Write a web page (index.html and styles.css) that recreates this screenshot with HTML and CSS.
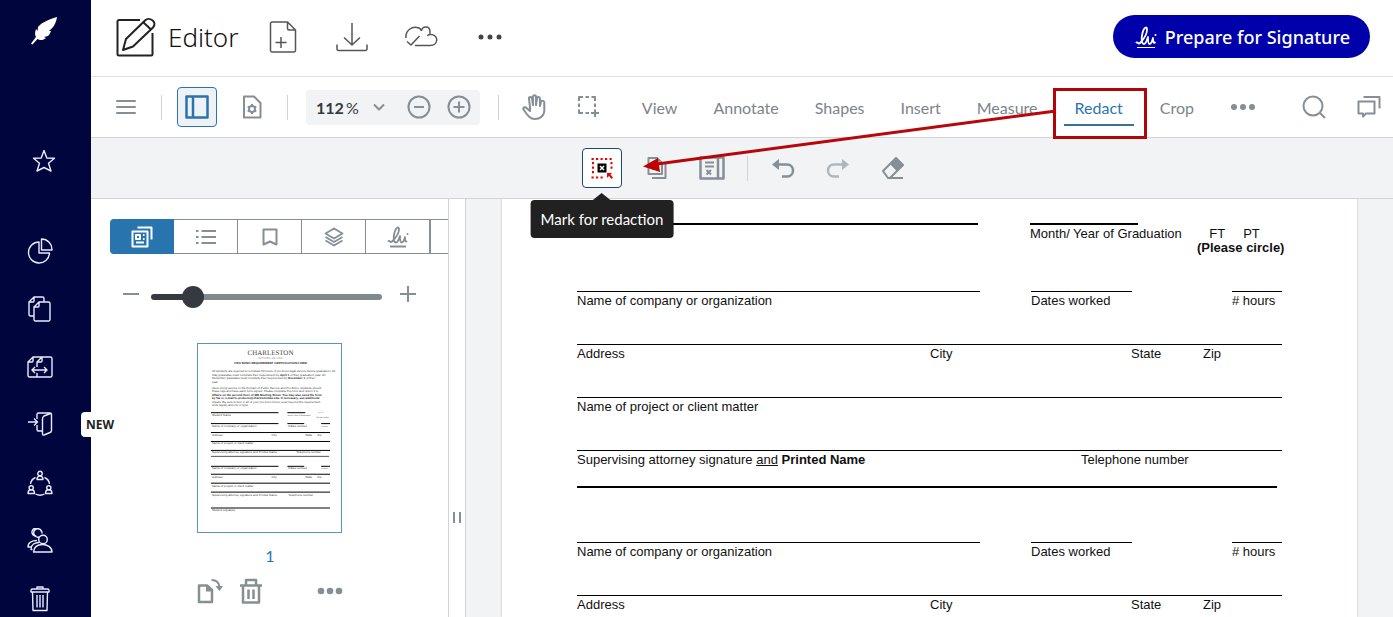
FILE: index.html
```html
<!DOCTYPE html>
<html lang="en">
<head>
    <meta charset="UTF-8">
    <meta name="viewport" content="width=device-width, initial-scale=1.0">
    <title>Editor</title>
    <link rel="stylesheet" href="styles.css">
</head>
<body>
    <nav class="sidebar">
        <a href="#" class="logo" aria-label="Home">
            <svg width="28" height="28" viewBox="0 0 28 28"><path fill="#fff" d="M27 0C20 2 12 5 8 10L7.500 14L6 12C4.500 16 5 18 6 20L1 26.500L2.500 27.500L7.500 22C10 24 14 23 16 21L14 20L18 19C20 17 21 14 21 14L19 14C24 10 26 6 27 0Z"/></svg>
        </a>
        <a href="#" class="favorite" aria-label="Favorites">
            <svg width="24" height="24" viewBox="0 0 24 24"><path d="M12 1.500L14.800 9L22.500 9.300L16.500 14.200L19 22L12 18.500L5 22L7.500 14.200L1.500 9.300L9.200 9Z"/></svg>
        </a>
        <div class="nav-list">
            <a href="#" aria-label="Dashboard">
                <svg width="26" height="26" viewBox="0 0 26 26"><path d="M12 4A10.500 10.500 0 1 0 22.500 15H12ZM14.500 1V12H25A10.500 10.500 0 0 0 14.500 1Z"/></svg>
            </a>
            <a href="#" aria-label="Documents">
                <svg width="26" height="26" viewBox="0 0 26 26"><path d="M7 20H3.500A1.500 1.500 0 0 1 2 18.500V6L7 1H15.500A1.500 1.500 0 0 1 17 2.500V6M2 6H6A1 1 0 0 0 7 5V1M12 6H21.500A1.500 1.500 0 0 1 23 7.500V23.500A1.500 1.500 0 0 1 21.500 25H8.500A1.500 1.500 0 0 1 7 23.500V11ZM7 11H11A1 1 0 0 0 12 10V6"/></svg>
            </a>
            <a href="#" aria-label="Templates">
                <svg width="26" height="22" viewBox="0 0 26 22"><path d="M1 6L6 1H23.500A1.500 1.500 0 0 1 25 2.500V19.500A1.500 1.500 0 0 1 23.500 21H2.500A1.500 1.500 0 0 1 1 19.500ZM1 6H5A1 1 0 0 0 6 5V1M10 11V6L15 1V5A1 1 0 0 1 14 6H10M10 17V21M5 14H20M8 11L5 14L8 17M17 11L20 14L17 17"/></svg>
            </a>
            <a href="#" class="has-badge" aria-label="Sign in">
                <svg width="26" height="26" viewBox="0 0 26 26"><path d="M10 7V2.500A1.500 1.500 0 0 1 11.500 1H23A1.500 1.500 0 0 1 24.500 2.500V18.500Q24.500 20 23 20.500L17 23Q15.500 23.500 15.500 22V7Q15.500 5 17 4L23.500 1.500M10 13V17.500A1.500 1.500 0 0 0 11.500 19H15M1 10H10M7 6.500L10.500 10L7 13.500"/></svg>
                <span class="badge">NEW</span>
            </a>
            <a href="#" aria-label="Teams">
                <svg width="26" height="26" viewBox="0 0 26 26"><circle cx="13" cy="3.500" r="2.200"/><path d="M10 9.500C10 5 16 5 16 9.500ZM1 23.500C1 18.500 7.500 18.500 7.500 23.500ZM18.500 23.500C18.500 18.500 25 18.500 25 23.500ZM8.500 7.500Q4 9.500 3.500 14M17.500 7.500Q22 9.500 22.500 14M8.500 24Q13 26.500 17.500 24"/><circle cx="4.200" cy="17.800" r="2.100"/><circle cx="21.800" cy="17.800" r="2.100"/></svg>
            </a>
            <a href="#" aria-label="Contacts">
                <svg width="26" height="26" viewBox="0 0 26 26"><circle cx="16" cy="11.500" r="4.300"/><path d="M12 9A4.200 4.200 0 1 1 15 5.500M9.500 8.500A4 4 0 1 1 14.500 3.500M8 8A4 4 0 1 1 12 1.500M6.500 24C7 18.500 11 16.500 15.500 16.500C20 16.500 25 19 25 24ZM5.500 21.500H4C4 16.500 8 14.500 12 14.500M4 19H1C1 14.500 5 12.500 10 12.500"/></svg>
            </a>
            <a href="#" aria-label="Trash">
                <svg width="22" height="26" viewBox="0 0 22 26"><path d="M2 6H20V4.500A1.500 1.500 0 0 0 18.500 3H3.500A1.500 1.500 0 0 0 2 4.500ZM8 3V1H14V3M3.500 6L4 24.500H18L18.500 6M8 9V21.500M11 9V21.500M14 9V21.500"/></svg>
            </a>
        </div>
    </nav>

    <main class="main">
        <header class="header">
            <div class="title">
                <svg width="40" height="40" viewBox="0 0 40 40"><path d="M24 3H3A1.500 1.500 0 0 0 1.500 4.500V37A1.500 1.500 0 0 0 3 38.500H35A1.500 1.500 0 0 0 36.500 37V16M7 33L10 22L29 3.500C33 -1 42 5 37 10.500L17 29.500ZM27.500 5.500L35 12.500"/></svg>
                <h1>Editor</h1>
            </div>
            <button class="header-btn" aria-label="New document">
                <svg width="28" height="32" viewBox="0 0 28 32"><path d="M18.500 1H3A1.500 1.500 0 0 0 1.500 2.500V29.500A1.500 1.500 0 0 0 3 31H25A1.500 1.500 0 0 0 26.500 29.500V9ZM18.500 1V7.500A1.500 1.500 0 0 0 20 9H26.500M12 16V27M6.500 21.500H17.500"/></svg>
            </button>
            <button class="header-btn" aria-label="Download">
                <svg width="32" height="30" viewBox="0 0 32 30"><path d="M16 1V23M8 15.500L16 23L24 15.500M1 22.500V27A1.500 1.500 0 0 0 2.500 28.500H29.500A1.500 1.500 0 0 0 31 27V22.500"/></svg>
            </button>
            <button class="header-btn" aria-label="Saved to cloud">
                <svg width="34" height="24" viewBox="0 0 34 24"><path d="M2 13C1 6 8 0 15 3Q17 4 17.500 6M17.500 6C18 1 26 0 26 7V9.500C35 9 35 20.500 26 20.500H11M26 9.500Q24 9.500 23.500 11M3 16.500L7 20L15.500 11"/></svg>
            </button>
            <button class="header-btn" aria-label="More">
                <svg width="24" height="6" viewBox="0 0 24 6"><g class="dots"><circle cx="3" cy="3" r="2.500"/><circle cx="12" cy="3" r="2.500"/><circle cx="21" cy="3" r="2.500"/></g></svg>
            </button>
            <button class="prepare">
                <svg width="22" height="24" viewBox="0 0 22 24"><path d="M1 18C2.500 16 3.500 20 5 18C8 15 12 9 12 4.500C12 1 9 2 7.500 8C6 14 6.500 19 9 19C11 19 12 15 13 12C13 15 13 19 14.500 19C16.500 19 17.500 15 18 13C18 17 18.500 19 20.500 17" stroke-width="1.800"/><path d="M2 22.500H20" stroke-width="1"/><circle cx="20.500" cy="10" r="1" fill="#fff" stroke="none"/></svg>
                Prepare for Signature
            </button>
        </header>

        <div class="toolbar">
            <button class="tool" aria-label="Menu">
                <svg width="20" height="14" viewBox="0 0 20 14"><path d="M1 1H19M1 7H19M1 13H19" stroke-linecap="round"/></svg>
            </button>
            <span class="divider"></span>
            <button class="tool selected" aria-label="Toggle panel">
                <svg width="24" height="24" viewBox="0 0 24 24"><path d="M1.500 1.500H22.500V22.500H1.500ZM8 1.500V22.500" stroke-width="2.500"/></svg>
            </button>
            <button class="tool" aria-label="View controls">
                <svg width="20" height="24" viewBox="0 0 20 24"><path d="M2 1.500H12L18.500 8V22.500H2Z"/><circle cx="10" cy="14" r="3"/><path d="M10 9V11M10 17V19M5.700 11.500L7.400 12.500M12.600 15.500L14.300 16.500M5.700 16.500L7.400 15.500M12.600 12.500L14.300 11.500" stroke-width="2"/></svg>
            </button>
            <span class="divider"></span>
            <div class="zoom">
                <input type="text" value="112" aria-label="Zoom level"><span>%</span>
                <button class="zoom-menu" aria-label="Zoom presets">
                    <svg width="12" height="8" viewBox="0 0 12 8"><path d="M1 1.500L6 6.500L11 1.500"/></svg>
                </button>
                <button class="tool" aria-label="Zoom out">
                    <svg width="24" height="24" viewBox="0 0 24 24"><circle cx="12" cy="12" r="10.500"/><path d="M7 12H17"/></svg>
                </button>
                <button class="tool" aria-label="Zoom in">
                    <svg width="24" height="24" viewBox="0 0 24 24"><circle cx="12" cy="12" r="10.500"/><path d="M6.500 12H17.500M12 6.500V17.500"/></svg>
                </button>
            </div>
            <span class="divider"></span>
            <button class="tool" aria-label="Pan">
                <svg width="24" height="26" viewBox="0 0 24 26"><path d="M8 13L7 5C6.700 2.500 9.500 2.200 10 4.500L11 11V3C11 .5 14 .5 14 3V11L15 4.500C15.300 2.500 18 2.500 18 5V12L19 7.500C20 6 22.700 7 22.300 9V17C22 22 18 25 13 25C8 25 6 22 1.500 15.500C.5 13.500 3 12.500 4.500 14L8 17V13"/></svg>
            </button>
            <button class="tool" aria-label="Select">
                <svg width="24" height="24" viewBox="0 0 24 24"><path d="M2 6V2H6M8.500 2H12M14.500 2H18V6M18 8.500V12M2 8.500V12M2 14.500V18H6M8.500 18H12M18 14.500V22M14 18H22"/></svg>
            </button>
            <nav class="tabs">
                <button>View</button>
                <button>Annotate</button>
                <button>Shapes</button>
                <button>Insert</button>
                <button>Measure</button>
                <button class="active">Redact</button>
                <button>Crop</button>
            </nav>
            <button class="tool" aria-label="More tools">
                <svg width="24" height="6" viewBox="0 0 24 6"><g class="dots"><circle cx="3" cy="3" r="3"/><circle cx="12" cy="3" r="3"/><circle cx="21" cy="3" r="3"/></g></svg>
            </button>
            <div class="toolbar-end">
                <button class="tool" aria-label="Search">
                    <svg width="24" height="24" viewBox="0 0 24 24"><circle cx="11" cy="11" r="9.500"/><path d="M18 18L23 23"/></svg>
                </button>
                <button class="tool" aria-label="Comments">
                    <svg width="24" height="24" viewBox="0 0 24 24"><path d="M6.500 2H22.500V13.500M1.500 6.500H17.500V18.500H9L6 21.500V18.500H1.500Z"/></svg>
                </button>
            </div>
            <svg class="arrow" width="420" height="70" viewBox="0 0 420 70"><path d="M413 8L14 61" stroke-width="3"/><path class="head" d="M0 63.500L15 55L17 69Z"/></svg>
        </div>

        <div class="subbar">
            <div class="tooltip-anchor">
                <button class="tool mark" aria-label="Mark for redaction" aria-describedby="markTip">
                    <svg width="24" height="24" viewBox="0 0 24 24"><path d="M1.500 3H22.500M21.500 6V14M1.500 21.500H14M3 6V19" stroke="#e00" stroke-dasharray="2.200 2.300"/><path fill="#000" stroke="none" d="M7.500 7.500H16.500V16.500H7.500Z"/><path d="M10 10L14 14M14 10L10 14" stroke="#fff" stroke-width="1.500"/><path d="M17 17H22L20.500 18.500L23 21.500L21.500 23L19 20L17 22Z" fill="#e00" stroke="none"/></svg>
                </button>
                <span class="tooltip" id="markTip" role="tooltip">Mark for redaction</span>
            </div>
            <button class="tool" aria-label="Redact pages">
                <svg width="20" height="24" viewBox="0 0 20 24"><path d="M1.500 2H10L15 7V18H1.500ZM5 22H18.500V8"/><path d="M5 9H11M5 13H11"/></svg>
            </button>
            <button class="tool" aria-label="Redaction panel">
                <svg width="26" height="24" viewBox="0 0 26 24"><path d="M1.500 1.500H24.500V22.500H1.500ZM19 1.500V22.500" stroke-width="2.500"/><path d="M6 6.500H15M6 10.500H15M7.500 14L12 18.500M12 14L7.500 18.500"/></svg>
            </button>
            <span class="divider"></span>
            <button class="tool" aria-label="Undo">
                <svg width="24" height="20" viewBox="0 0 24 20"><path d="M5 6.500H16C24 6.500 24 18.500 16 18.500H11" stroke-width="2.500"/><path class="head" d="M1 6.500L8 1V12Z"/></svg>
            </button>
            <button class="tool faded" aria-label="Redo">
                <svg width="24" height="20" viewBox="0 0 24 20"><path d="M19 6.500H8C0 6.500 0 18.500 8 18.500H13" stroke-width="2.500"/><path class="head" d="M23 6.500L16 1V12Z"/></svg>
            </button>
            <button class="tool" aria-label="Eraser">
                <svg width="24" height="24" viewBox="0 0 24 24"><path d="M2 15L15 2L22 9L9 22H7Z"/><path class="head" d="M9 8L15 1.500L22.500 9L16 15.500Z"/><path d="M8 22H22"/></svg>
            </button>
        </div>

        <div class="workspace">
            <aside class="panel">
                <div class="panel-tabs">
                    <button class="active" aria-label="Thumbnails">
                        <svg width="22" height="22" viewBox="0 0 22 22"><path d="M6.500 1.500H20.500V13.500M1.500 5.500H16.500V20.500H1.500ZM5 9H9V13H5ZM12 9H13.500M12 13H13.500M5 16.500H13"/></svg>
                    </button>
                    <button aria-label="Outlines">
                        <svg width="20" height="16" viewBox="0 0 20 16"><path d="M5.500 2H20M5.500 8H20M5.500 14H20M0 2H2.500M0 8H2.500M0 14H2.500"/></svg>
                    </button>
                    <button aria-label="Bookmarks">
                        <svg width="16" height="18" viewBox="0 0 16 18"><path d="M1.500 1.500H14.500V16.500L8 13.500L1.500 16.500Z"/></svg>
                    </button>
                    <button aria-label="Layers">
                        <svg width="20" height="20" viewBox="0 0 20 20"><path d="M10 1.500L18.500 6.500L10 11.500L1.500 6.500ZM1.500 10L10 15L18.500 10M1.500 13.500L10 18.500L18.500 13.500" stroke-width="1.800"/></svg>
                    </button>
                    <button aria-label="Signatures">
                        <svg width="22" height="22" viewBox="0 0 22 22"><path d="M1 15.500C2.500 13.500 3.500 17.500 5 15.500C8 12.500 12 7.500 12 3.500C12 0 9 1 7.500 6.500C6 12 6.500 16.500 9 16.500C11 16.500 12 13 13 10C13 13 13 16.500 14.500 16.500C16.500 16.500 17.500 13 18 11C18 15 18.500 16.500 20 15" stroke-width="1.800"/><path d="M3 20.500H19"/><circle cx="20.500" cy="8" r="1" stroke="none" fill="#868e96"/></svg>
                    </button>
                    <button aria-label="More panels"></button>
                </div>
                <div class="size-row">
                    <button aria-label="Smaller thumbnails">
                        <svg width="16" height="16" viewBox="0 0 16 16"><path d="M0 8H16"/></svg>
                    </button>
                    <input type="range" min="0" max="100" value="15" aria-label="Thumbnail size">
                    <button aria-label="Larger thumbnails">
                        <svg width="16" height="16" viewBox="0 0 16 16"><path d="M0 8H16M8 0V16"/></svg>
                    </button>
                </div>
                <div class="thumb">
                    <svg width="143" height="188" viewBox="0 0 144 189">
                        <g class="thumb-text">
                            <text x="73" y="11" class="thumb-logo">CHARLESTON</text>
                            <text x="73" y="14.500" class="thumb-sub">SCHOOL OF LAW</text>
                            <text x="73" y="19.500" class="thumb-title">PRO BONO REQUIREMENT CERTIFICATION FORM</text>
                            <text x="14" y="28">All students are required to complete 50 hours of pro bono legal service before graduation. All</text>
                            <text x="14" y="32">May graduates must complete their requirement by <tspan class="b">April 1</tspan> of their graduation year. All</text>
                            <text x="14" y="35">December graduates must complete their requirement by <tspan class="b">November 1</tspan> of their</text>
                            <text x="14" y="39">year.</text>
                            <text x="14" y="45">Upon doing service in the Domain of Public Service and Pro Bono, students should</text>
                            <text x="14" y="48">these logs and have each form signed. Please complete this form and return it to</text>
                            <text x="14" y="52" class="b">Affairs on the second floor of 385 Meeting Street. You may also send the form</text>
                            <text x="14" y="55" class="b">by fax or e-mail to probono@charlestonlaw.edu. If necessary, use additional</text>
                            <text x="14" y="59">sheets. Be sure to turn in all of your pro bono hours, even beyond the requirement.</text>
                            <text x="14" y="62">write legibly and ink or type.</text>
                            <text x="14" y="72">Student Name</text><text x="90" y="72" class="small">Month/ Year of Graduation</text><text x="121" y="69" class="small">FT  PT</text><text x="119" y="74" class="small">(Please circle)</text>
                            <text x="14" y="83">Name of company or organization</text><text x="91" y="83">Dates worked</text><text x="124" y="83" class="small"># hours</text>
                            <text x="14" y="92">Address</text><text x="74" y="92">City</text><text x="108" y="92">State</text><text x="120" y="92">Zip</text>
                            <text x="14" y="101">Name of project or client matter</text>
                            <text x="14" y="110">Supervising attorney signature and Printed Name</text><text x="99" y="110">Telephone number</text>
                            <text x="14" y="126">Name of company or organization</text><text x="91" y="126">Dates worked</text><text x="124" y="126" class="small"># hours</text>
                            <text x="14" y="135">Address</text><text x="74" y="135">City</text><text x="108" y="135">State</text><text x="120" y="135">Zip</text>
                            <text x="14" y="144">Name of project or client matter</text>
                            <text x="14" y="153">Supervising attorney signature and Printed Name</text><text x="91" y="153">Telephone number</text>
                            <text x="14" y="168">Student signature</text>
                        </g>
                        <path class="thumb-lines" d="M13 69H81M90 69H108M13 80H81M90 80H107M124 80H133M13 89H133M13 98H133M13 107H133M13 123H81M90 123H107M124 123H133M13 131H133M13 140H133M13 149H133M13 165H133"/>
                        <path d="M13 113H132" stroke="#555" stroke-width="1"/>
                    </svg>
                </div>
                <div class="page-number">1</div>
                <div class="page-actions">
                    <button aria-label="Rotate page">
                        <svg width="26" height="26" viewBox="0 0 26 26"><path d="M2 7.500H10L15 12V24H2Z" stroke-width="2.500"/><path d="M14.500 2C19 2 22 4 22.500 9"/><path class="head" d="M9 7H10.500L16 12.500V13.500H9ZM18.500 8H26L22.500 13Z"/></svg>
                    </button>
                    <button aria-label="Delete page">
                        <svg width="24" height="26" viewBox="0 0 24 26"><path d="M1 7.500H23M4 7.500V24.500H20V7.500M7 7V2H17V7M9.500 11.500V21M14.500 11.500V21" stroke-width="2.500"/></svg>
                    </button>
                    <button class="more" aria-label="More page actions">
                        <svg width="26" height="8" viewBox="0 0 26 8"><g class="dots"><circle cx="4" cy="4" r="3.300"/><circle cx="13" cy="4" r="3.300"/><circle cx="22" cy="4" r="3.300"/></g></svg>
                    </button>
                </div>
            </aside>
            <div class="splitter"><span></span></div>
            <section class="viewer">
                <article class="page">
                    <div class="row first">
                        <div class="field"></div>
                        <div class="field">Month/ Year of Graduation</div>
                        <div class="circle">
                            <div><span>FT</span><span>PT</span></div>
                            <b>(Please circle)</b>
                        </div>
                    </div>
                    <div class="row company">
                        <div class="field">Name of company or organization</div>
                        <div class="field">Dates worked</div>
                        <div class="field"># hours</div>
                    </div>
                    <div class="row address">
                        <span>Address</span><span>City</span><span>State</span><span>Zip</span>
                    </div>
                    <div class="row line">Name of project or client matter</div>
                    <div class="row signature">
                        <span>Supervising attorney signature <u>and</u> <b>Printed Name</b></span>
                        <span>Telephone number</span>
                    </div>
                    <hr>
                    <div class="row company">
                        <div class="field">Name of company or organization</div>
                        <div class="field">Dates worked</div>
                        <div class="field"># hours</div>
                    </div>
                    <div class="row address">
                        <span>Address</span><span>City</span><span>State</span><span>Zip</span>
                    </div>
                </article>
            </section>
        </div>
    </main>
</body>
</html>
```
FILE: styles.css
```css
* {
    box-sizing: border-box;
}
body {
    display: flex;
    height: 100vh;
    margin: 0;
    overflow: hidden;
    font-family: Lato, sans-serif;
    font-size: 16px;
    background-color: #fff;
}
button {
    display: flex;
    align-items: center;
    justify-content: center;
    padding: 0;
    border: none;
    background: none;
    font: inherit;
    color: inherit;
    cursor: pointer;
}
svg {
    display: block;
    flex: none;
    fill: none;
    stroke: #868e96;
    stroke-width: 2;
    stroke-linejoin: round;
}
.dots,
.head {
    fill: #868e96;
    stroke: none;
}

/* sidebar */
.sidebar {
    position: relative;
    z-index: 2;
    flex: none;
    width: 91px;
    background-color: #00053d;
}
.sidebar a {
    display: flex;
    align-items: center;
    justify-content: center;
    height: 58px;
}
.sidebar svg {
    stroke: #e8ecff;
    stroke-width: 1.4;
}
.sidebar .logo {
    width: 87px;
    height: 62px;
}
.sidebar .logo svg {
    stroke: none;
}
.sidebar .favorite {
    width: 87px;
    margin: 70px 0 32px;
}
.nav-list a {
    width: 80px;
}
.has-badge {
    position: relative;
}
.badge {
    position: absolute;
    top: 16px;
    left: 81px;
    padding: 0 5px;
    border-radius: 4px;
    background-color: #fff;
    color: #222;
    font: bold 12px/25px "Noto Sans", sans-serif;
}

/* header */
.main {
    display: flex;
    flex: 1;
    flex-direction: column;
    min-width: 0;
}
.header {
    display: flex;
    flex: none;
    align-items: center;
    height: 77px;
    padding: 0 23px 3px 25px;
    border-bottom: 1px solid #dee2e6;
}
.title {
    display: flex;
    align-items: center;
    gap: 12px;
    margin-right: 21px;
}
.title svg {
    stroke: #222;
}
.title h1 {
    margin: 0;
    font: 300 26px/36px "Noto Sans", sans-serif;
    color: #111;
}
.header-btn {
    width: 48px;
    height: 48px;
    margin-right: 21px;
}
.header-btn svg {
    stroke: #555;
    stroke-width: 1.5;
}
.header-btn .dots {
    fill: #444;
}
.prepare {
    gap: 8px;
    height: 43px;
    margin-left: auto;
    padding: 0 20px 0 22px;
    border-radius: 22px;
    background-color: #0000aa;
    color: #fff;
    font: 500 18px "Noto Sans", sans-serif;
}
.prepare svg {
    stroke: #fff;
}

/* toolbars */
.toolbar,
.subbar {
    position: relative;
    display: flex;
    flex: none;
    align-items: center;
    gap: 15px;
    height: 61px;
    border-bottom: 1px solid #ced4da;
}
.toolbar {
    padding: 0 4px 0 15px;
}
.tool {
    flex: none;
    width: 40px;
    height: 40px;
    border-radius: 4px;
}
.selected {
    border: 1px solid #2a74ad;
    background-color: #eef2f6;
}
.selected svg {
    stroke: #2a74ad;
}
.divider {
    width: 1px;
    height: 25px;
    background-color: #ced4da;
}
.zoom {
    display: flex;
    align-items: center;
    height: 35px;
    margin: 0 3px;
    padding: 0 1px 0 10px;
    border-radius: 4px;
    background-color: #f1f3f5;
    color: #343a40;
}
.zoom input {
    width: 30px;
    padding: 0;
    border: none;
    background: none;
    font: bold 16px Lato, sans-serif;
    color: #343a40;
}
.zoom-menu {
    width: 40px;
    height: 35px;
}
.tabs {
    display: flex;
    gap: 16px;
    margin: 0 4px 0 8px;
}
.tabs button {
    position: relative;
    height: 38px;
    padding: 2px 10px 0;
    border-bottom: 2px solid transparent;
    color: #7c848b;
}
.tabs .active {
    padding: 2px 11px 0;
    border-bottom-color: #3a7296;
    color: #2a76b0;
}
/* callout around the active tab */
.tabs .active::after {
    content: "";
    position: absolute;
    z-index: 1;
    top: 0;
    left: -11px;
    right: -13px;
    bottom: -15px;
    border: 3px solid #b0060a;
}
.toolbar-end {
    display: flex;
    gap: 15px;
    margin-left: auto;
}
.arrow {
    position: absolute;
    z-index: 1;
    top: 26px;
    left: 552px;
    stroke: #b8060a;
    pointer-events: none;
}
.arrow .head {
    fill: #c00000;
}
.subbar {
    justify-content: center;
    padding-left: 11px;
    background-color: #f1f3f5;
}
.mark {
    border: 1px solid #1d4a72;
    background-color: #fff;
}
.mark svg {
    stroke-linejoin: miter;
}
.faded {
    opacity: 0.6;
}
.tooltip-anchor {
    position: relative;
}
.tooltip {
    position: absolute;
    z-index: 2;
    top: 52px;
    left: 50%;
    transform: translateX(-50%);
    padding: 0 10px;
    border-radius: 4px;
    background-color: #212121;
    color: #fff;
    font-size: 15px;
    line-height: 38px;
    white-space: nowrap;
}
.tooltip::before {
    content: "";
    position: absolute;
    top: -7px;
    left: 50%;
    margin-left: -10px;
    border: 10px solid transparent;
    border-top: none;
    border-bottom: 8px solid #212121;
}

/* thumbnails panel */
.workspace {
    display: flex;
    flex: 1;
    min-height: 0;
}
.panel {
    display: flex;
    flex: none;
    flex-direction: column;
    width: 358px;
    padding: 20px 0 0 19px;
    overflow: hidden;
    border-right: 1px solid #ced4da;
}
.panel-tabs {
    display: flex;
    flex: none;
    height: 35px;
}
.panel-tabs button {
    flex: none;
    width: 64px;
    border: 1px solid #868e96;
    border-left-width: 0;
}
.panel-tabs .active {
    border-color: #2874ae;
    border-radius: 4px 0 0 4px;
    background-color: #2874ae;
}
.panel-tabs .active svg {
    stroke: #fff;
}
.panel-tabs button:last-child {
    border-left-width: 1px;
}
.size-row {
    display: flex;
    align-items: center;
    gap: 12px;
    margin-top: 32px;
    padding-left: 13px;
}
.size-row button {
    width: 16px;
    padding-bottom: 6px;
}
.size-row button:last-child {
    margin-left: 6px;
}
.size-row input {
    width: 231px;
    height: 22px;
    margin: 0;
    background: none;
    appearance: none;
}
.size-row input::-webkit-slider-runnable-track {
    height: 6px;
    border-radius: 3px;
    background: linear-gradient(to right, #343a40 18%, #7f898e 18%);
}
.size-row input::-webkit-slider-thumb {
    width: 22px;
    height: 22px;
    margin-top: -8px;
    border-radius: 50%;
    background-color: #343a40;
    appearance: none;
}
.thumb {
    width: 145px;
    margin: 35px 0 0 87px;
    border: 1px solid #5b93bd;
}
.thumb svg {
    stroke: none;
}
.thumb-text {
    fill: #444;
    font-family: "Liberation Sans", Arial, sans-serif;
    font-size: 3px;
    text-rendering: geometricPrecision;
}
.thumb-logo,
.thumb-sub,
.thumb-title {
    text-anchor: middle;
}
.thumb-logo {
    font: 7px "Liberation Serif", serif;
}
.thumb-sub {
    fill: #999;
}
.thumb-title,
.thumb-text .b {
    font-weight: bold;
    fill: #222;
}
.thumb-text .small {
    font-size: 2px;
}
.thumb-lines {
    stroke: #000;
    stroke-width: 1;
}
.page-number {
    margin: 13px 0 0 87px;
    width: 146px;
    line-height: 20px;
    text-align: center;
    color: #2a76b0;
}
.page-actions {
    display: flex;
    align-items: center;
    gap: 16px;
    margin: 12px 0 0 87px;
}
.page-actions .more {
    margin-left: 38px;
}
.splitter {
    flex: none;
    width: 17px;
    padding: 313px 4px 0;
    border-right: 1px solid #ced4da;
}
.splitter span {
    display: block;
    width: 8px;
    height: 11px;
    border: solid #868e96;
    border-width: 0 2px;
}

/* document */
.viewer {
    flex: 1;
    min-width: 0;
    padding: 0 36px;
    background-color: #f1f3f5;
}
.page {
    height: 100%;
    padding: 24px 75px 0;
    overflow: hidden;
    background-color: #fff;
    box-shadow: 0 0 2px #adb5bd;
    font: 13px/15px "Liberation Sans", Arial, sans-serif;
    color: #111;
}
.row {
    display: grid;
    height: 53px;
}
.field {
    height: 20px;
    min-width: 0;
    padding-top: 1px;
    border-top: 1px solid #000;
    white-space: nowrap;
}
.first {
    grid-template-columns: 401fr 52fr 108fr 59fr 85fr;
    height: 68px;
}
.first .field {
    border-top-width: 2px;
}
.first .field:nth-child(2),
.company .field:nth-child(2) {
    grid-column: 3;
}
.circle {
    grid-column: 5;
    min-width: 0;
    padding-top: 4px;
    line-height: 14px;
    text-align: center;
    white-space: nowrap;
}
.circle div {
    display: flex;
    justify-content: center;
    gap: 18px;
    padding-right: 10px;
}
.company {
    grid-template-columns: 403fr 51fr 101fr 100fr 50fr;
}
.company .field:nth-child(3) {
    grid-column: 5;
}
.address,
.line,
.signature {
    padding-top: 1px;
    border-top: 1px solid #000;
}
.address {
    grid-template-columns: 353fr 201fr 72fr 79fr;
}
.signature {
    grid-template-columns: 504fr 201fr;
    height: 36px;
}
hr {
    height: 2px;
    margin: 0 5px 54px 0;
    border: none;
    background-color: #000;
}
```
